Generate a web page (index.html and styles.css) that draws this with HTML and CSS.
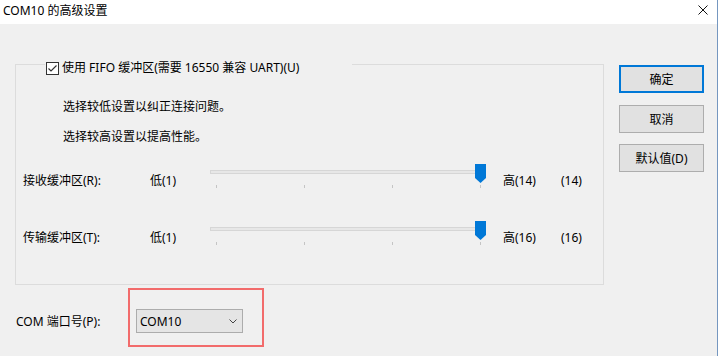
FILE: index.html
```html
<!DOCTYPE html>
<html lang="zh-CN">
<head>
    <meta charset="UTF-8">
    <title>COM10 的高级设置</title>
    <link rel="stylesheet" href="styles.css">
</head>
<body>
    <div class="window">
        <div class="titlebar">
            <span class="title">COM10 的高级设置</span>
            <svg class="close" width="10" height="10" viewBox="0 0 10 10">
                <path d="M0.5 0.5L9.5 9.5M9.5 0.5L0.5 9.5" stroke="#111" stroke-width="1" fill="none"/>
            </svg>
        </div>
        <div class="content">
            <div class="left">
                <div class="group">
                    <div class="legend">
                        <svg class="checkbox" width="13" height="13" viewBox="0 0 13 13">
                            <rect x="0.5" y="0.5" width="12" height="12" fill="#fff" stroke="#333"/>
                            <path d="M2.5 6.5L5 9L10.5 3.5" stroke="#333" stroke-width="1.2" fill="none"/>
                        </svg>
                        <span>使用 FIFO 缓冲区(需要 16550 兼容 UART)(U)</span>
                    </div>
                    <p class="hint first">选择较低设置以纠正连接问题。</p>
                    <p class="hint">选择较高设置以提高性能。</p>

                    <div class="buffer-row first">
                        <span class="buffer-label">接收缓冲区(R):</span>
                        <span class="low">低(1)</span>
                        <div class="slider">
                            <div class="track"></div>
                            <div class="ticks"><i></i><i></i><i></i><i></i></div>
                            <svg class="thumb" width="11" height="19" viewBox="0 0 11 19">
                                <path d="M0 0H11V14L5.5 19L0 14Z" fill="#0078d7"/>
                            </svg>
                        </div>
                        <span class="high">高(14)</span>
                        <span class="value">(14)</span>
                    </div>

                    <div class="buffer-row">
                        <span class="buffer-label">传输缓冲区(T):</span>
                        <span class="low">低(1)</span>
                        <div class="slider">
                            <div class="track"></div>
                            <div class="ticks"><i></i><i></i><i></i><i></i></div>
                            <svg class="thumb" width="11" height="19" viewBox="0 0 11 19">
                                <path d="M0 0H11V14L5.5 19L0 14Z" fill="#0078d7"/>
                            </svg>
                        </div>
                        <span class="high">高(16)</span>
                        <span class="value">(16)</span>
                    </div>
                </div>

                <div class="port-row">
                    <span class="port-label">COM 端口号(P):</span>
                    <div class="highlight">
                        <div class="combo">
                            <span>COM10</span>
                            <svg width="8" height="5" viewBox="0 0 8 5">
                                <path d="M0.5 0.5L4 4L7.5 0.5" stroke="#444" stroke-width="1" fill="none"/>
                            </svg>
                        </div>
                    </div>
                </div>
            </div>

            <div class="buttons">
                <button class="btn default">确定</button>
                <button class="btn">取消</button>
                <button class="btn">默认值(D)</button>
            </div>
        </div>
    </div>
</body>
</html>
```

FILE: styles.css
```css
body {
    margin: 0;
    background: #fff;
    font-family: "Noto Sans", "Noto Sans CJK SC", sans-serif;
    font-size: 12px;
    color: #000;
}
.window {
    width: 717px;
    height: 356px;
    background: #f0f0f0;
    border-right: 1px solid #7597c0;
    overflow: hidden;
}
.titlebar {
    height: 24px;
    box-sizing: border-box;
    background: #fff;
    display: flex;
    justify-content: space-between;
    align-items: flex-start;
    padding: 3px 9px 0 3px;
    line-height: 16px;
}
.close {
    margin-top: 2px;
}
.content {
    display: flex;
}
.left {
    padding: 40px 0 0 15px;
}
.group {
    width: 589px;
    height: 221px;
    box-sizing: border-box;
    border: 1px solid #dcdcdc;
}
.legend {
    display: flex;
    align-items: center;
    gap: 3px;
    width: 307px;
    height: 16px;
    margin: -5px 0 0 29px;
    padding-left: 1px;
    box-sizing: border-box;
    background: #f0f0f0;
    line-height: 16px;
}
.hint {
    margin: 14px 0 0;
    padding-left: 47px;
    line-height: 16px;
}
.hint.first {
    margin-top: 23px;
}
.buffer-row {
    display: flex;
    align-items: flex-start;
    height: 26px;
    padding-left: 7px;
    margin-top: 31px;
    line-height: 16px;
}
.buffer-row.first {
    margin-top: 19px;
}
.buffer-row span {
    margin-top: 9px;
}
.buffer-label {
    width: 127px;
}
.low {
    width: 60px;
}
.slider {
    position: relative;
    width: 276px;
    height: 26px;
}
.track {
    height: 4px;
    margin-top: 6px;
    box-sizing: border-box;
    border: 1px solid #d6d6d6;
    background: #e7e7e7;
}
.ticks {
    display: flex;
    justify-content: space-between;
    padding: 0 5px 0 6px;
    margin-top: 11px;
}
.ticks i {
    display: block;
    width: 1px;
    height: 3px;
    background: #c4c4c4;
}
.thumb {
    position: absolute;
    top: 0;
    right: 0;
}
.high {
    width: 58px;
    margin-left: 17px;
}
.port-row {
    display: flex;
    align-items: flex-start;
    margin-top: 3px;
}
.port-label {
    width: 112px;
    margin: 26px 0 0 1px;
    line-height: 16px;
}
.highlight {
    border: 2px solid #f26b6b;
    padding: 19px 19px 12px 6px;
}
.combo {
    width: 107px;
    height: 24px;
    box-sizing: border-box;
    border: 1px solid #acacac;
    background: #e5e5e5;
    display: flex;
    align-items: center;
    justify-content: space-between;
    padding: 0 5px 0 3px;
}
.buttons {
    display: flex;
    flex-direction: column;
    gap: 11.5px;
    margin-left: 15px;
    padding-top: 41px;
}
.btn {
    width: 85px;
    height: 28px;
    box-sizing: border-box;
    padding: 0;
    background: #e1e1e1;
    border: 1px solid #adadad;
    font: inherit;
    color: #000;
}
.btn.default {
    border: 2px solid #0078d7;
}
```
